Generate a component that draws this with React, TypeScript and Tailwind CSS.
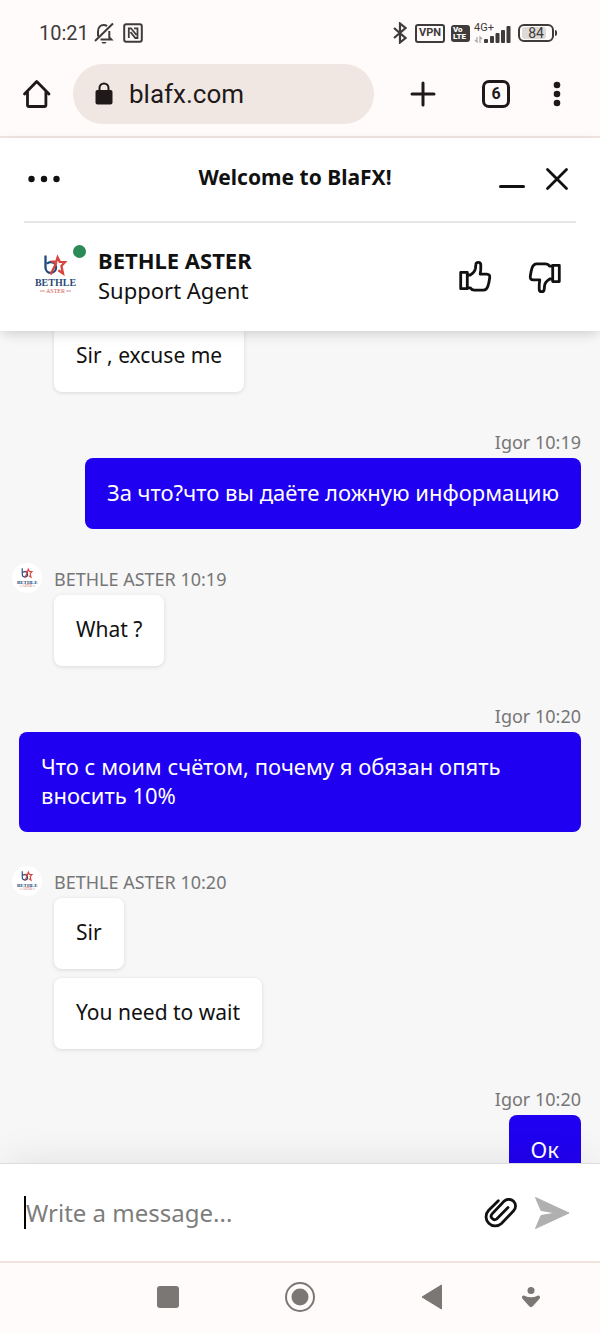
import { useState } from 'react';
import type { ReactNode } from 'react';

interface Message {
  id: number;
  from: 'agent' | 'visitor';
  // Label above the bubble, left out for follow-up messages
  label?: string;
  text: string;
}

const messages: Message[] = [
  { id: 1, from: 'agent', text: 'Sir , excuse me' },
  { id: 2, from: 'visitor', label: 'Igor 10:19', text: 'За что?что вы даёте ложную информацию' },
  { id: 3, from: 'agent', label: 'BETHLE ASTER 10:19', text: 'What ?' },
  { id: 4, from: 'visitor', label: 'Igor 10:20', text: 'Что с моим счётом, почему я обязан опять вносить 10%' },
  { id: 5, from: 'agent', label: 'BETHLE ASTER 10:20', text: 'Sir' },
  { id: 6, from: 'agent', text: 'You need to wait' },
  { id: 7, from: 'visitor', label: 'Igor 10:20', text: 'Ок' },
];

function Logo({ className }: { className: string }) {
  return (
    <svg viewBox="0 0 48 48" className={className} role="img" aria-label="Bethle Aster">
      <g fill="none" strokeWidth="2.300">
        <path d="M14.500 4.500V17a5.300 5.300 0 1 0 5.300-5.800c-1.600 0-2.900.6-3.800 1.600" stroke="#1f4a7d" />
        <path
          d="M19.500 23.500l5.500-11-3-1.900 3.400-.3 1.200-4 2.200 4.500 5.200.3-3.600 3.900 1.600 7.500-4.700-3.300"
          stroke="#d8433c"
        />
      </g>
      <text x="24.500" y="35" textAnchor="middle" fill="#2a4c78" className="font-['Liberation_Serif',serif] text-[10px] font-bold">
        BETHLE
      </text>
      <text x="24.500" y="42" textAnchor="middle" fill="#cc5a52" className="font-['Liberation_Serif',serif] text-[6px]">
        ASTER
      </text>
      <path d="M9 40h5M35 40h5" stroke="#cc5a52" strokeWidth=".7" />
    </svg>
  );
}

function ThumbIcon({ className }: { className?: string }) {
  return (
    <svg
      viewBox="0 0 34 34"
      className={`size-[34px] ${className ?? ''}`}
      fill="none"
      stroke="currentColor"
      strokeWidth="2.800"
      strokeLinejoin="round"
    >
      <path d="M2.700 12.400h6.600v16.300H2.700z" />
      <path d="M9.500 15h2.800c2.600-1.600 4.700-4 5.100-6.500l.4-3.800c.2-3.200 4.900-3.200 5 .2.100 3.500.1 6-.6 9.300h6.600c2.400 0 3.200 1.400 2.900 3.500-.4 3-.8 6-1.900 8.800-.9 2.300-2.300 3.700-4.300 3.700h-9.200c-2 0-2.800-.5-4-2.300H9.500" />
    </svg>
  );
}

function StatusBar() {
  return (
    <div className="flex h-16 items-center pt-0.5 pr-[43px] pl-[39px] font-[Roboto,sans-serif] text-[#3f3b3a]">
      <span className="text-[20px] leading-6">10:21</span>
      <svg viewBox="0 0 22 22" className="ml-1 size-[22px]" fill="none" stroke="currentColor" strokeWidth="2">
        <path d="M5 14.500V9.500c0-4 2.500-6.500 5.800-6.500 1.200 0 2.300.4 3.200 1.100M16.300 9v6.500l2 2H7.500" />
        <path d="M20 1.500L2 19" />
        <path d="M8.500 20h5l-1 1.500h-3z" fill="currentColor" stroke="none" />
      </svg>
      <svg viewBox="0 0 20 20" className="ml-2 size-5" fill="none" stroke="currentColor" strokeWidth="2">
        <rect x="1.200" y="1.200" width="17.600" height="17.600" rx="2" />
        <path d="M5.800 15V5.300h2.200l5.500 6.700M11 5.300h3.500V15h-2.200L7.500 9" strokeWidth="1.800" />
      </svg>

      <div className="ml-auto flex items-center">
        <svg viewBox="0 0 14 22" className="h-[22px] w-3.5" fill="none" stroke="currentColor" strokeWidth="2.200">
          <path d="M1 6l11.500 10L7 20.500v-19L12.500 6 1 16" />
        </svg>
        <span className="ml-2 flex h-[19px] w-[30px] items-center justify-center rounded-[3px] border-2 border-current text-[11px] leading-3 font-bold">
          VPN
        </span>
        <span className="ml-1.5 flex h-[17px] w-[19px] flex-col justify-center rounded-[3px] bg-[#3f3b3a] pl-0.5 text-[8px] leading-[7px] font-black text-white">
          <span>Vo</span>
          <span>LTE</span>
        </span>
        <div className="ml-1 flex h-[20px] w-10 items-end">
          <div className="-mr-2.5 flex h-full w-5 flex-col justify-between whitespace-nowrap">
            <span className="text-[11px] leading-[10px]">4G+</span>
            <svg viewBox="0 0 9 7" className="h-[7px] w-[9px]" fill="none" stroke="#aaa6a4" strokeWidth="1.200">
              <path d="M1 4l2 2V1M8 3L6 1v6" />
            </svg>
          </div>
          <svg viewBox="0 0 28 18" className="h-[18px] w-7" fill="currentColor">
            <rect x="0" y="14" width="4" height="4" rx="1" />
            <rect x="6" y="11" width="4" height="7" rx="1" />
            <rect x="11.500" y="8" width="4" height="10" rx="1" />
            <rect x="17" y="5" width="4" height="13" rx="1" />
            <rect x="22.500" y="1" width="4" height="17" rx="1" />
          </svg>
        </div>
        <span className="ml-1 flex h-[18px] w-9 items-center rounded-[6px] border-2 border-current px-0.5">
          <span className="flex h-3 w-6 items-center justify-center rounded-[3px] bg-[#dedad8] pl-1 text-[14px] leading-3">84</span>
        </span>
        <span className="ml-px h-1.5 w-0.5 rounded-r bg-[#3f3b3a]" />
      </div>
    </div>
  );
}

function BrowserBar() {
  return (
    <div className="flex items-center border-b-2 border-[#f2e6e2] pr-[19px] pb-3 pl-[22px] text-[#1f1a19]">
      <button type="button" aria-label="Home">
        <svg viewBox="0 0 30 30" className="size-[30px]" fill="none" stroke="currentColor" strokeWidth="2.800" strokeLinejoin="round" strokeLinecap="round">
          <path d="M2.500 15L14.700 2.500 27 15M5.500 12.500V26q0 1.500 1.500 1.500h15.400q1.500 0 1.500-1.500V12.500" />
        </svg>
      </button>
      <div className="mr-[13px] ml-[21px] flex h-[60px] min-w-0 flex-1 items-center gap-4 rounded-full bg-[#f0e6e2] pl-[22px]">
        <svg viewBox="0 0 18 24" className="h-6 w-[18px] shrink-0">
          <rect x=".5" y="8" width="17" height="14.500" rx="2" fill="currentColor" />
          <path d="M4.500 9V6a4.500 4.500 0 0 1 9 0v3" fill="none" stroke="currentColor" strokeWidth="2" />
        </svg>
        <input
          type="text"
          aria-label="Address"
          defaultValue="blafx.com"
          className="w-full min-w-0 bg-transparent font-[Roboto,sans-serif] text-[26px] leading-8 outline-none"
        />
      </div>
      <button type="button" aria-label="New tab" className="flex w-[72px] justify-center">
        <svg viewBox="0 0 26 26" className="size-[26px]" stroke="currentColor" strokeWidth="3" strokeLinecap="round">
          <path d="M13 2v22M2 13h22" />
        </svg>
      </button>
      <button type="button" aria-label="Open tabs" className="flex w-[74px] justify-center">
        <span className="flex size-7 items-center justify-center rounded-[7px] border-3 border-current font-[Roboto,sans-serif] text-[16px] leading-4 font-bold">
          6
        </span>
      </button>
      <button type="button" aria-label="Browser menu" className="flex w-12 justify-center">
        <svg viewBox="0 0 8 26" className="h-[26px] w-2" fill="currentColor">
          <circle cx="4" cy="4" r="3.300" />
          <circle cx="4" cy="13" r="3.300" />
          <circle cx="4" cy="22" r="3.300" />
        </svg>
      </button>
    </div>
  );
}

function ChatHeader() {
  return (
    <header className="relative z-10 bg-white px-6 shadow-[0_4px_12px_-2px_rgba(0,0,0,0.18)]">
      <div className="grid h-[85px] grid-cols-[80px_1fr_80px] items-center border-b-2 border-[#e6e6e6] pb-0.5">
        <button type="button" aria-label="Options" className="pl-1">
          <svg viewBox="0 0 32 8" className="h-2 w-8" fill="currentColor">
            <circle cx="3.500" cy="4" r="3.200" />
            <circle cx="16" cy="4" r="3.200" />
            <circle cx="28.500" cy="4" r="3.200" />
          </svg>
        </button>
        <h1 className="pr-2.5 pb-1 text-center text-[21px] leading-[30px] font-bold">Welcome to BlaFX!</h1>
        <div className="flex items-center justify-end gap-5 pr-[7px]">
          <button type="button" aria-label="Minimize">
            <svg viewBox="0 0 26 24" className="h-6 w-[26px]" stroke="currentColor" strokeWidth="3" strokeLinecap="round">
              <path d="M1.500 19.500h23" />
            </svg>
          </button>
          <button type="button" aria-label="Close">
            <svg viewBox="0 0 24 24" className="size-6" stroke="currentColor" strokeWidth="2.800" strokeLinecap="round">
              <path d="M2.500 2.500l19 19M21.500 2.500l-19 19" />
            </svg>
          </button>
        </div>
      </div>
      <div className="flex h-[108px] items-center pr-3.5 pl-[7px]">
        <div className="relative pb-1">
          <Logo className="size-12" />
          <span className="absolute -top-1.5 -right-[7px] size-[13px] rounded-full bg-[#2b8a56]" />
        </div>
        <div className="ml-[19px] flex-1 pb-1 text-[22px] leading-[30px]">
          <p className="font-bold">BETHLE ASTER</p>
          <p>Support Agent</p>
        </div>
        <div className="flex gap-9">
          <button type="button" aria-label="Rate as good">
            <ThumbIcon />
          </button>
          <button type="button" aria-label="Rate as bad">
            <ThumbIcon className="rotate-180" />
          </button>
        </div>
      </div>
    </header>
  );
}

function Bubble({ mine, children }: { mine: boolean; children: ReactNode }) {
  return (
    <p
      className={`w-fit rounded-lg px-[22px] pt-5 pb-[22px] leading-[29px] ${
        mine ? 'ml-auto bg-[#2000f0] text-[22px] text-white' : 'bg-white text-[21px] shadow-[0_1px_4px_rgba(0,0,0,0.12)]'
      }`}
    >
      {children}
    </p>
  );
}

function MessageRow({ message }: { message: Message }) {
  const mine = message.from === 'visitor';

  if (mine) {
    return (
      <li className="mt-[38px] px-[19px]">
        <p className="mb-1 text-right text-[18px] leading-6 text-[#767676]">{message.label}</p>
        <Bubble mine>{message.text}</Bubble>
      </li>
    );
  }

  return (
    <li className={`flex gap-3 pr-[19px] pl-3 ${message.label ? 'mt-[34px]' : 'mt-[9px] first:mt-0'}`}>
      <div className="w-[30px] shrink-0">
        {message.label && (
          <div className="flex size-[30px] items-center justify-center rounded-full bg-white">
            <Logo className="size-6" />
          </div>
        )}
      </div>
      <div className={message.label ? 'pt-1' : ''}>
        {message.label && <p className="mb-1 text-[18px] leading-6 text-[#767676]">{message.label}</p>}
        <Bubble mine={false}>{message.text}</Bubble>
      </div>
    </li>
  );
}

function Composer() {
  const [draft, setDraft] = useState('');

  return (
    <form
      className="relative z-10 flex h-[98px] shrink-0 items-center border-t border-[#dcdcdc] bg-white pr-[30px] pl-6 shadow-[0_-8px_40px_-6px_rgba(0,0,0,0.09)]"
      onSubmit={(e) => e.preventDefault()}
    >
      {/* Text cursor */}
      {!draft && <span className="h-[33px] w-0.5 bg-black" />}
      <input
        type="text"
        aria-label="Message"
        placeholder="Write a message..."
        value={draft}
        onChange={(e) => setDraft(e.target.value)}
        className="min-w-0 flex-1 text-[24px] leading-8 outline-none placeholder:text-[#7d7d7d]"
      />
      <button type="button" aria-label="Attach file">
        <svg viewBox="0 0 34 30" className="h-[30px] w-[34px]" fill="none" stroke="currentColor" strokeWidth="2.800" strokeLinecap="round">
          <path d="M14.300 2.700L4.500 12.500A9.200 9.200 0 0 0 17.500 25.500L29.600 12.800A6.700 6.700 0 0 0 20 3.300L8.100 15.900A3.400 3.400 0 0 0 12.900 20.700L24 9.500" />
        </svg>
      </button>
      <button type="submit" aria-label="Send" className="ml-4">
        <svg viewBox="0 0 36 34" className="h-[34px] w-9" fill="#b0b0b0" stroke="#b0b0b0" strokeLinejoin="round">
          <path d="M1.500 1.500L35 17 1.500 32.500 7 19.500 22 17 7 14.500z" />
        </svg>
      </button>
    </form>
  );
}

function NavBar() {
  return (
    <nav className="relative z-20 grid h-[72px] shrink-0 grid-cols-[17fr_22fr_22fr_22fr_11fr_6fr] items-center justify-items-center border-t-2 border-[#f2e2dd] bg-[#fffbfa] pb-0.5 text-[#7a7775]">
      <button type="button" aria-label="Recent apps" className="col-start-2 size-[22px] rounded-[3px] bg-current" />
      <button type="button" aria-label="Home screen">
        <svg viewBox="0 0 30 30" className="size-[30px]">
          <circle cx="15" cy="15" r="14" fill="none" stroke="currentColor" strokeWidth="2" />
          <circle cx="15" cy="15" r="8.500" fill="currentColor" />
        </svg>
      </button>
      <button type="button" aria-label="Back">
        <svg viewBox="0 0 22 26" className="h-[26px] w-[22px]" fill="currentColor" stroke="currentColor" strokeLinejoin="round">
          <path d="M1 13L20.500 1v24z" />
        </svg>
      </button>
      <button type="button" aria-label="Hide keyboard">
        <svg viewBox="0 0 20 22" className="h-[22px] w-5" fill="currentColor">
          <circle cx="10" cy="4.500" r="3.500" />
          <path d="M3.500 9.800C1.500 9 .2 11 1.500 12.700l6.500 7.400q2 2.200 4 0l6.500-7.400c1.300-1.700 0-3.700-2-2.900-4.200 2-8.800 2-13 0z" />
        </svg>
      </button>
    </nav>
  );
}

export default function App() {
  return (
    <div className="flex h-screen flex-col overflow-hidden bg-[#fffbfa] font-['Noto_Sans',sans-serif] text-[#111]">
      <StatusBar />
      <BrowserBar />
      <ChatHeader />
      {/* The list is scrolled slightly past the top of the first bubble */}
      <main className="min-h-0 flex-1 overflow-hidden bg-[#f7f7f7]">
        <ul className="-mt-2.5">
          {messages.map((message) => (
            <MessageRow key={message.id} message={message} />
          ))}
        </ul>
      </main>
      <Composer />
      <NavBar />
    </div>
  );
}
